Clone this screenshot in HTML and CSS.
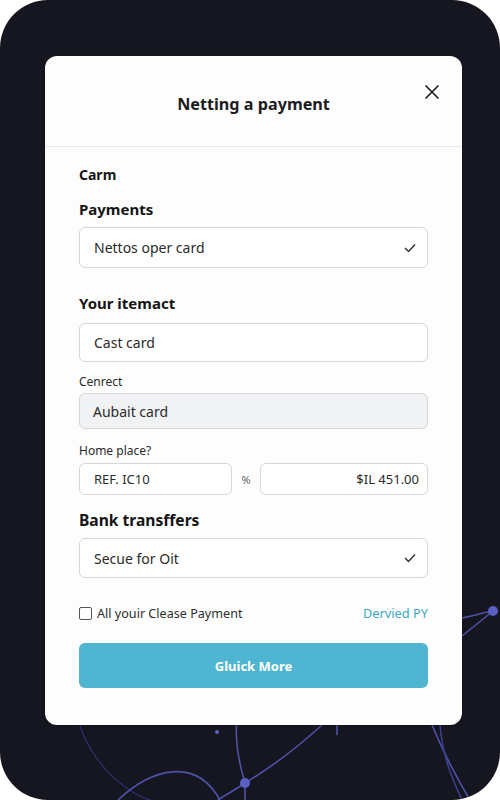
FILE: index.html
```html
<!DOCTYPE html>
<html>
<head>
<meta charset="utf-8">
<link rel="stylesheet" href="styles.css">
</head>
<body>
<div class="frame">
  <svg class="bg-lines" width="500" height="800" viewBox="0 0 500 800">
    <g fill="none" stroke="#4d52a8" stroke-width="1.6">
      <path d="M75 700 C 80 760, 130 795, 150 800" stroke="#2e3170" stroke-width="1.2"/>
      <path d="M118 800 C 150 770, 195 755, 220 800"/>
      <path d="M240 700 C 232 730, 238 760, 245 783 L 245 800"/>
      <path d="M245 783 C 275 765, 300 745, 322 725"/>
      <path d="M245 783 C 235 790, 225 795, 218 800"/>
      <path d="M337 724 L 337 735"/>
      <path d="M430 720 C 440 745, 455 775, 470 800"/>
      <path d="M440 725 C 443 760, 455 785, 462 800" stroke="#3b3f8c"/>
      <path d="M493 611 C 482 613, 472 616, 462 618"/>
      <path d="M493 611 C 482 620, 472 628, 462 636"/>
    </g>
    <g fill="#5a5fc4">
      <circle cx="493" cy="611" r="5"/>
      <circle cx="245" cy="783" r="5"/>
      <circle cx="217" cy="732" r="2"/>
    </g>
  </svg>

  <div class="modal">
    <div class="modal-header">
      <span></span>
      <h1 class="modal-title">Netting a payment</h1>
      <button class="close-btn" aria-label="Close">
        <svg width="14" height="14" viewBox="0 0 14 14"><path d="M1 1 L13 13 M13 1 L1 13" stroke="#222" stroke-width="1.7" stroke-linecap="round"/></svg>
      </button>
    </div>

    <div class="modal-body">
      <div class="section-title">Carm</div>
      <div class="group-title g-payments">Payments</div>
      <div class="field select s1">
        <span>Nettos oper card</span>
        <svg width="12" height="10" viewBox="0 0 12 10"><path d="M1 5 L4.5 8.5 L11 1.5" fill="none" stroke="#333" stroke-width="1.5"/></svg>
      </div>

      <div class="group-title g-item">Your itemact</div>
      <div class="field input1">Cast card</div>

      <div class="small-label l-cenrect">Cenrect</div>
      <div class="field disabled">Aubait card</div>

      <div class="small-label l-home">Home place?</div>
      <div class="pair-row">
        <div class="field short">REF. IC10</div>
        <span class="pct">%</span>
        <div class="field short amount">$IL 451.00</div>
      </div>

      <div class="group-title big g-bank">Bank transffers</div>
      <div class="field select s2">
        <span>Secue for Oit</span>
        <svg width="12" height="10" viewBox="0 0 12 10"><path d="M1 5 L4.5 8.5 L11 1.5" fill="none" stroke="#333" stroke-width="1.5"/></svg>
      </div>

      <div class="check-row">
        <label class="check-label"><span class="checkbox"></span>All youir Clease Payment</label>
        <a class="link">Dervied PY</a>
      </div>

      <button class="primary-btn">Gluick More</button>
    </div>
  </div>
</div>
</body>
</html>
```

FILE: styles.css
```css
* { box-sizing: border-box; }
html, body { margin: 0; padding: 0; background: #ffffff; }
body { font-family: "Noto Sans", "Open Sans", sans-serif; color: #1a1a1a; }

.frame {
  position: relative;
  width: 500px;
  height: 800px;
  background: #15161f;
  border-radius: 48px;
  overflow: hidden;
  padding: 56px 38px 0 45px;
}

.bg-lines { position: absolute; left: 0; top: 0; }

.modal {
  position: relative;
  width: 417px;
  height: 669px;
  background: #fdfdfd;
  border-radius: 12px;
  box-shadow: 0 1px 3px rgba(0,0,0,0.25);
}

.modal-header {
  height: 91px;
  border-bottom: 1px solid #e6e7ea;
  display: grid;
  grid-template-columns: 40px 1fr 40px;
  align-items: start;
  padding: 0 23px;
}

.modal-title {
  margin: 36px 0 0;
  text-align: center;
  font-size: 16.2px;
  line-height: 24px;
  font-weight: 700;
  color: #1c1c1e;
}

.close-btn {
  justify-self: end;
  margin-top: 29px;
  width: 14px; height: 14px;
  padding: 0; border: 0; background: none;
  display: flex;
}

.modal-body {
  padding: 0 34px 0 34px;
  display: flex;
  flex-direction: column;
}

.section-title {
  margin-top: 19px;
  font-size: 14px;
  line-height: 18px;
  font-weight: 700;
  color: #151515;
}

.group-title {
  font-size: 15px;
  line-height: 18px;
  font-weight: 700;
  color: #151515;
}
.group-title.big { font-size: 15.6px; }
.g-payments { margin-top: 16px; }
.g-item { margin-top: 26px; }
.g-bank { margin-top: 16px; }

.small-label {
  font-size: 12px;
  line-height: 16px;
  color: #2a2a2a;
}
.l-cenrect { margin-top: 12px; }
.l-home { margin-top: 14px; }

.field {
  border: 1px solid #d5d6d9;
  border-radius: 6px;
  background: #ffffff;
  font-size: 14px;
  color: #2b2b2b;
  display: flex;
  align-items: center;
  padding: 0 14px;
}

.select { justify-content: space-between; padding-right: 11px; }
.s1 { margin-top: 9px; height: 41px; }
.s2 { margin-top: 9px; height: 40px; }
.input1 { margin-top: 11px; height: 39px; }
.disabled { margin-top: 3px; height: 36px; background: #f1f2f4; padding-left: 13px; }

.pair-row {
  margin-top: 4px;
  display: grid;
  grid-template-columns: 153px 28px 1fr;
  align-items: center;
}
.short { height: 32px; padding: 0 14px; font-size: 13px; }
.amount { justify-content: flex-end; padding-right: 8px; }
.pct { text-align: center; font-size: 11px; color: #666; }

.check-row {
  margin-top: 27px;
  height: 16px;
  display: flex;
  justify-content: space-between;
  align-items: center;
}
.check-label {
  display: flex;
  align-items: center;
  gap: 5px;
  font-size: 12.6px;
  color: #2e2e2e;
}
.checkbox {
  width: 13px; height: 13px;
  border: 1.5px solid #555;
  border-radius: 2px;
  background: #fff;
}
.link {
  font-size: 12.8px;
  color: #3aa8c6;
}

.primary-btn {
  margin-top: 22px;
  height: 45px;
  border: 0;
  border-radius: 6px;
  background: #4fb5d0;
  color: #ffffff;
  font-family: "Noto Sans", "Open Sans", sans-serif;
  font-size: 13px;
  font-weight: 700;
}
```
